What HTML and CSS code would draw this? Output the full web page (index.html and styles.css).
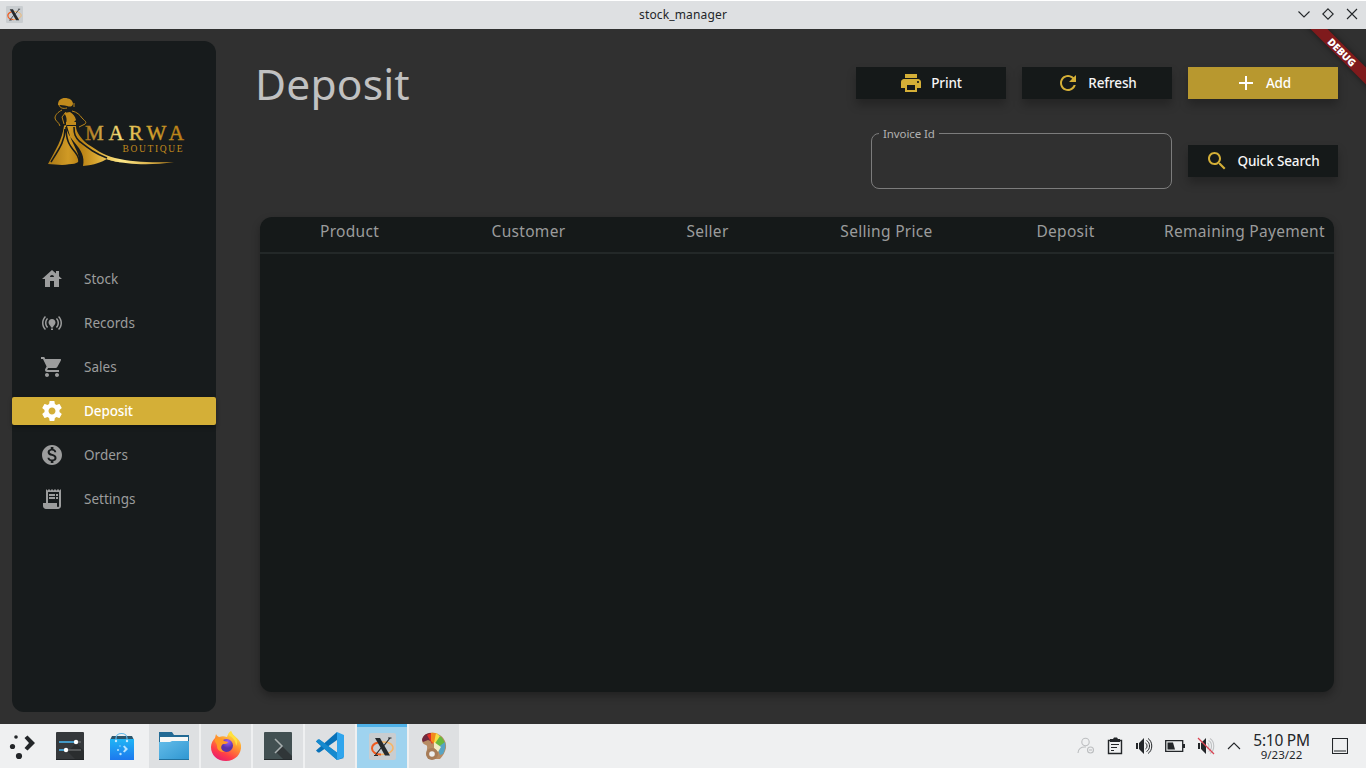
FILE: index.html
```html
<!DOCTYPE html>
<html lang="en">
<head>
<meta charset="utf-8">
<title>stock_manager</title>
<link rel="stylesheet" href="styles.css">
</head>
<body>
<svg class="defs" width="0" height="0">
  <symbol id="xorg" viewBox="0 0 27 27">
    <rect width="27" height="27" rx="2" fill="#c9cdd0"/>
    <path d="M9 9.500C5 10.500 3 13 3 15.500c0 3.500 4 6 9 6" fill="none" stroke="#f05a1e" stroke-width="2"/>
    <path d="M10 9.300c8-1.500 14 1.500 14 5.700 0 3.500-5 6.500-12 6.500" fill="none" stroke="#f7b563" stroke-width="1.500"/>
    <path d="M6 5h5l10 17.500h-5z" fill="#25292c"/>
    <path d="M21 5L15 12.500M12 15L6.500 22" stroke="#25292c" stroke-width="1.200"/>
    <path d="M19 5h3.500M5 22.500h4" stroke="#25292c"/>
  </symbol>
</svg>

<header class="titlebar">
  <svg class="titlebar-icon" width="17" height="17"><use href="#xorg"/></svg>
  <span class="titlebar-text">stock_manager</span>
  <div class="window-controls">
    <svg width="12" height="12" viewBox="0 0 12 12"><path d="M.5 3.500L6 9l5.500-5.500"/></svg>
    <svg width="12" height="12" viewBox="0 0 12 12"><path d="M6 .800L11.200 6 6 11.200.8 6z"/></svg>
    <svg width="12" height="12" viewBox="0 0 12 12"><path d="M1 1l10 10M11 1L1 11"/></svg>
  </div>
</header>

<main class="app">
  <div class="debug"><span>DEBUG</span></div>
  <aside class="sidebar">
    <svg class="logo" width="170" height="95" viewBox="0 0 170 95">
      <defs>
        <linearGradient id="gold" gradientUnits="userSpaceOnUse" x1="56" x2="154" y1="0" y2="0">
          <stop offset="0" stop-color="#a8741a"/><stop offset=".35" stop-color="#f5df7a"/><stop offset=".6" stop-color="#d4a632"/><stop offset="1" stop-color="#b87d13"/>
        </linearGradient>
        <linearGradient id="dress" gradientUnits="userSpaceOnUse" x1="18" x2="144" y1="0" y2="0">
          <stop offset="0" stop-color="#a97816"/><stop offset=".16" stop-color="#d09a25"/><stop offset=".26" stop-color="#b78014"/><stop offset=".38" stop-color="#d8a52f"/><stop offset=".58" stop-color="#ffe98a"/><stop offset="1" stop-color="#b98014"/>
        </linearGradient>
      </defs>
      <path fill="#c08a1c" d="M28 20c0-5 3-7 7-7s8 2 8 6c-1 3-3 3-6 2-3-1-6-1-9-1zM34 28l6-1c3 2 5 4 6 8l-4 4h-6c1-4 1-7-2-11zM36 37h10v3H36z"/>
      <path fill="none" stroke="#b78319" stroke-width="1" d="M29 20c1 3 4 4 8 3M32 25c-4 2-7 5-7 8 0 3 4 4 5 8M42 26c5 1 8 4 10 7 3 3 5 4 3 6l-6 3M36 27l-4 5 2 7M44 18v4"/>
      <path fill="url(#dress)" d="M34 41c-2 14-8 23-16 38l14 1c10-1 17-1 17-5 0-8-7-17-9-24l-3-10-2-1zM36 41h10c0 6 4 10 7 14l11 11c7 7 17 9 30 12-8-1-14-3-17-4-5 3-13 6-24 7 2-9-2-16-8-23-5-6-8-10-9-17z"/>
      <path fill="url(#dress)" d="M53 56c12 8 20 14 32 17 17 4 36 5 59 4-25 4-47 2-61-1-13-3-22-10-30-20z"/>
      <path fill="none" stroke="#171b1c" stroke-width="1.600" d="M35 44c0 12-6 20-14 33M36 42c0 13 3 18 9 25 4 5 5 9 4 14M44 42c0 7 1 10 6 15M49 56c9 7 15 12 28 17"/>
      <text class="logo-name" x="55" y="55" textLength="99" lengthAdjust="spacing" fill="url(#gold)" stroke="url(#gold)" stroke-width=".4">MARWA</text>
      <text class="logo-sub" x="92.500" y="67" textLength="60" lengthAdjust="spacing" fill="#c18a1c">BOUTIQUE</text>
    </svg>
    <nav class="nav">
      <a class="nav-item"><svg viewBox="0 0 24 24"><path d="M19 9.300V4h-3v2.600L12 3 2 12h3v8h5v-6h4v6h5v-8h3l-3-2.700zm-9 .7c0-1.100.9-2 2-2s2 .9 2 2h-4z"/></svg><span>Stock</span></a>
      <a class="nav-item"><svg viewBox="0 0 24 24"><path d="M15.500 11.500c0 2-2.500 3.500-2.500 5h-2c0-1.500-2.500-3-2.500-5C8.500 9.570 10.070 8 12 8s3.500 1.570 3.500 3.500zM13 17.500h-2V19h2zM22 12c0-2.760-1.120-5.260-2.930-7.070l-1.060 1.060C19.550 7.530 20.500 9.660 20.500 12s-.95 4.470-2.490 6.010l1.060 1.060C20.880 17.260 22 14.760 22 12zM3.500 12c0-2.340.95-4.470 2.490-6.010L4.930 4.930C3.120 6.740 2 9.240 2 12s1.120 5.260 2.930 7.070l1.060-1.060C4.450 16.470 3.500 14.340 3.500 12zM17.500 12c0 1.520-.62 2.890-1.610 3.890l1.060 1.060C18.220 15.680 19 13.930 19 12s-.78-3.680-2.050-4.950l-1.060 1.060C16.880 9.110 17.500 10.480 17.500 12zM7.050 16.950l1.060-1.060c-1-1-1.610-2.370-1.610-3.890s.62-2.890 1.610-3.890L7.050 7.050C5.780 8.320 5 10.070 5 12s.78 3.680 2.050 4.950z"/></svg><span>Records</span></a>
      <a class="nav-item"><svg viewBox="0 0 24 24"><path d="M7 18c-1.100 0-1.990.9-1.990 2S5.900 22 7 22s2-.9 2-2-.9-2-2-2zM1 2v2h2l3.600 7.590-1.350 2.450c-.16.280-.25.610-.25.960 0 1.100.9 2 2 2h12v-2H7.420c-.14 0-.25-.11-.25-.25l.03-.12.900-1.630h7.450c.75 0 1.410-.41 1.750-1.030l3.580-6.490A1 1 0 0 0 20 4H5.210l-.94-2H1zm16 16c-1.100 0-1.990.9-1.990 2s.89 2 1.990 2 2-.9 2-2-.9-2-2-2z"/></svg><span>Sales</span></a>
      <a class="nav-item active"><svg viewBox="0 0 24 24"><path d="M19.430 12.980c.04-.32.070-.64.070-.98s-.03-.66-.07-.98l2.110-1.650c.19-.15.240-.42.120-.64l-2-3.460c-.12-.22-.39-.3-.61-.22l-2.490 1c-.52-.4-1.080-.73-1.690-.98l-.38-2.650C14.460 2.180 14.250 2 14 2h-4c-.25 0-.46.180-.49.420l-.38 2.650c-.61.250-1.170.590-1.690.980l-2.490-1c-.23-.09-.49 0-.61.220l-2 3.460c-.13.220-.07.490.12.640l2.110 1.650c-.04.320-.07.650-.07.980s.03.660.07.980l-2.110 1.650c-.19.150-.24.420-.12.640l2 3.460c.12.220.39.300.61.220l2.490-1c.52.400 1.080.730 1.690.980l.38 2.650c.03.240.24.420.49.420h4c.25 0 .46-.18.490-.42l.38-2.650c.61-.25 1.170-.59 1.690-.98l2.490 1c.23.090.49 0 .61-.22l2-3.460c.12-.22.070-.49-.12-.64l-2.110-1.650zM12 15.500c-1.930 0-3.500-1.570-3.500-3.500s1.570-3.500 3.500-3.500 3.500 1.570 3.500 3.500-1.570 3.500-3.500 3.500z"/></svg><span>Deposit</span></a>
      <a class="nav-item"><svg viewBox="0 0 24 24"><path d="M12 2C6.480 2 2 6.480 2 12s4.480 10 10 10 10-4.480 10-10S17.520 2 12 2zm1.410 16.090V20h-2.670v-1.930c-1.710-.36-3.160-1.460-3.270-3.400h1.960c.1 1.050.82 1.870 2.650 1.870 1.960 0 2.400-.98 2.400-1.590 0-.83-.44-1.610-2.670-2.140-2.480-.6-4.180-1.620-4.180-3.670 0-1.720 1.390-2.840 3.110-3.210V4h2.670v1.950c1.860.450 2.790 1.860 2.850 3.390H14.300c-.05-1.110-.64-1.870-2.220-1.870-1.500 0-2.400.68-2.400 1.640 0 .84.650 1.390 2.670 1.910s4.180 1.390 4.180 3.910c-.01 1.830-1.380 2.830-3.120 3.160z"/></svg><span>Orders</span></a>
      <a class="nav-item"><svg viewBox="0 0 24 24"><path d="M19.500 3.500L18 2l-1.500 1.500L15 2l-1.500 1.500L12 2l-1.500 1.500L9 2 7.500 3.500 6 2v14H3v3c0 1.660 1.340 3 3 3h12c1.660 0 3-1.340 3-3V2l-1.500 1.500zM19 19c0 .55-.45 1-1 1s-1-.45-1-1v-3H8V5h11v14zM9 7h6v2H9zM16 7h2v2h-2zM9 10h6v2H9zM16 10h2v2h-2z"/></svg><span>Settings</span></a>
    </nav>
  </aside>

  <section class="content">
    <div class="toolbar">
      <h1 class="title">Deposit</h1>
      <div class="actions">
        <button class="btn"><svg viewBox="0 0 24 24"><path d="M19 8H5c-1.660 0-3 1.340-3 3v6h4v4h12v-4h4v-6c0-1.660-1.340-3-3-3zm-3 11H8v-5h8v5zm3-7c-.55 0-1-.45-1-1s.45-1 1-1 1 .45 1 1-.45 1-1 1zm-1-9H6v4h12V3z"/></svg><span>Print</span></button>
        <button class="btn"><svg viewBox="0 0 24 24"><path d="M17.650 6.350C16.200 4.900 14.210 4 12 4c-4.420 0-7.990 3.580-7.990 8s3.570 8 7.990 8c3.730 0 6.840-2.550 7.730-6h-2.080c-.82 2.330-3.040 4-5.650 4-3.310 0-6-2.690-6-6s2.690-6 6-6c1.660 0 3.140.690 4.220 1.780L13 11h7V4l-2.350 2.350z"/></svg><span>Refresh</span></button>
        <button class="btn primary"><svg viewBox="0 0 24 24"><path d="M19 13h-6v6h-2v-6H5v-2h6V5h2v6h6v2z"/></svg><span>Add</span></button>
      </div>
    </div>
    <div class="search-row">
      <fieldset class="field"><legend>Invoice Id</legend></fieldset>
      <button class="btn"><svg viewBox="0 0 24 24"><path d="M15.500 14h-.79l-.28-.27C15.410 12.590 16 11.110 16 9.500 16 5.910 13.090 3 9.500 3S3 5.910 3 9.500 5.910 16 9.500 16c1.610 0 3.090-.59 4.230-1.570l.27.280v.79l5 4.990L20.490 19l-4.990-5zm-6 0C7.010 14 5 11.990 5 9.500S7.010 5 9.500 5 14 7.010 14 9.500 11.990 14 9.500 14z"/></svg><span>Quick Search</span></button>
    </div>
    <div class="table">
      <div class="table-head">
        <span>Product</span><span>Customer</span><span>Seller</span><span>Selling Price</span><span>Deposit</span><span>Remaining Payement</span>
      </div>
    </div>
  </section>
</main>

<footer class="taskbar">
  <div class="tasks">
    <div class="task plain launcher"><svg width="28" height="28" viewBox="0 0 28 28" fill="#232629"><circle cx="8" cy="5" r="1.800"/><circle cx="4.500" cy="14.500" r="2.600"/><circle cx="11" cy="24" r="3.100"/><path d="M16.500 6l3-2.500 7.500 7.500-7.500 7.500-3-2.500 4.500-5z"/></svg></div>
    <div class="task plain"><svg width="28" height="28" viewBox="0 0 28 28"><rect width="28" height="28" rx="1" fill="#35383b"/><path d="M12 20l8-9 8 8v9h-8z" fill="#2a2d2f"/><path d="M0 27.500h28" stroke="#202326"/><path d="M3 10h22M3 18h22" stroke="#646769" stroke-width="1.500"/><path d="M3 10h16M3 18h7" stroke="#3daee9" stroke-width="1.500"/><circle cx="20" cy="10" r="2.200" fill="#fff"/><circle cx="10" cy="18" r="2.200" fill="#fff"/></svg></div>
    <div class="task plain"><svg width="28" height="28" viewBox="0 0 28 28"><defs><linearGradient id="bag" x2="0" y2="1"><stop stop-color="#20b5f5"/><stop offset="1" stop-color="#1d78ee"/></linearGradient></defs><path d="M4 4h20l2 4H2z" fill="#2e566c"/><rect x="2" y="7" width="24" height="21" fill="url(#bag)"/><path d="M8 9V6c0-6 11-6 11 0v3" fill="none" stroke="#62b9e9" stroke-width="1.200"/><circle cx="8" cy="9" r="1.200" fill="#c7e8ff"/><circle cx="19" cy="9" r="1.200" fill="#c7e8ff"/><g fill="#b8e3ff"><circle cx="12" cy="14" r=".7"/><circle cx="10" cy="18" r="1"/><circle cx="12.500" cy="22" r="1.200"/><path d="M15 14.500l1.500-1 3.500 3.500-3.500 3.500-1.500-1 2-2.500z"/></g></svg></div>
    <div class="task"><svg width="30" height="28" viewBox="0 0 30 28"><defs><linearGradient id="folder" x2="1" y2="1"><stop stop-color="#63bce9"/><stop offset="1" stop-color="#2f96d1"/></linearGradient></defs><path d="M0 0h13l2 3h15v9H0z" fill="#236a94"/><path d="M1 5h28v8H1z" fill="#f8f8f6"/><path d="M0 10h11l2-1h17v19H0z" fill="url(#folder)"/><path d="M0 27.500h30" stroke="#22719e"/></svg></div>
    <div class="task"><svg width="32" height="32" viewBox="0 0 32 32"><defs><linearGradient id="fox" x1=".8" x2=".25" y1="0" y2="1"><stop stop-color="#fff44f"/><stop offset=".4" stop-color="#ff9630"/><stop offset=".75" stop-color="#ff3c48"/><stop offset="1" stop-color="#e51a74"/></linearGradient><radialGradient id="globe" cx=".6" cy=".2"><stop stop-color="#9b5df7"/><stop offset="1" stop-color="#5b32a8"/></radialGradient></defs><path d="M17 7c1-3 2-5 4-6 1 5 9 7 10 14 1 9-6 16-15 16S1 25 1 17c0-4 2-7 4-9l1-4c1 2 2 2 3 3 3-1 5-1 8 0z" fill="url(#fox)"/><circle cx="16.500" cy="15.500" r="6.500" fill="url(#globe)"/><path d="M5 9c4-2 7-1 9 2l4 1c-1 3-5 1-6 3-2 3 0 6 3 7-5 0-8-2-8-6 0-3-3-4-2-7z" fill="#ff9a26"/><path d="M18 5c5 2 8 6 8 11 3-5 0-9-3-11l-2-4z" fill="#ffe13d"/></svg></div>
    <div class="task"><svg width="28" height="28" viewBox="0 0 28 28"><rect width="28" height="28" rx="1" fill="#425052"/><path d="M12 20l6-6 10 10v4h-8z" fill="#303638"/><path d="M0 27.500h28" stroke="#252b2d"/><path d="M11 7l7 7-7 7" fill="none" stroke="#a8afb0" stroke-width="1.500"/></svg></div>
    <div class="task"><svg width="28" height="28" viewBox="0 0 28 28"><path d="M0 9.500l2-2h1.500L28 26l-7 2z" fill="#187fc4"/><path d="M0 18.500L21 0v8L3.500 20.500H2z" fill="#0871b8"/><path d="M21 0l7 3v22l-7 3z" fill="#30a5ed"/><path d="M0 9.500L2 7.500h1.500L21 20.500V28z" fill="#168acf"/></svg></div>
    <div class="task current"><svg width="27" height="27"><use href="#xorg"/></svg></div>
    <div class="task"><svg width="28" height="28" viewBox="0 0 28 28"><path d="M2 8C3 2 9 0 14 1c8 1 13 8 12 15-1 4-3 8-6 11H9c-5-5-1-9-2-13-1-2-5-1-5-6z" fill="#b78b63"/><path d="M2 8C3 2 8 1 11 1l2 9-5-2-5 2z" fill="#70283e"/><path d="M7 3l4-2 3 8-2 3z" fill="#e22e26"/><path d="M11 1c4-1 7 1 7 1l-3 11-4-4z" fill="#f28a1d"/><path d="M16 1l5 4-6 10-1-4z" fill="#f4df45"/><path d="M20 4c3 2 5 6 5 9l-9 4-2-4z" fill="#69b93d"/><path d="M25 10c1 4 0 8-2 12l-3 1-3-7z" fill="#57a4c4"/><path d="M14 10l7 5-3 5-4-4z" fill="#f1ecc3"/><circle cx="12" cy="22" r="6" fill="#a77c58"/><circle cx="12" cy="22" r="2.800" fill="#eceeee"/></svg></div>
  </div>
  <div class="tray">
    <svg class="muted" width="18" height="18" viewBox="0 0 18 18"><circle cx="8.500" cy="5" r="3.700"/><path d="M1 16c0-4 3-6.500 8-6"/><circle cx="13.500" cy="13" r="3"/><path d="M12 13h3"/></svg>
    <svg width="16" height="18" viewBox="0 0 16 18"><path d="M1.500 3.500h13v13h-13z" stroke-width="1.400"/><path d="M3 5V2h3l1-1.500h3L11 2h2v3z" fill="#232629" stroke="none"/><path d="M4 7.500h8M4 10.500h6M4 13.500h3"/></svg>
    <svg width="18" height="18" viewBox="0 0 18 18"><path d="M1 6h2v6H1zM4 6l5-5v16l-5-5z" fill="#232629" stroke="none"/><path d="M10.500 6c2 1 2 5 0 6M11.500 3.500c4 2 4 9 0 11M13 1.500c5 3 5 12 0 15" stroke-width="1"/></svg>
    <svg width="20" height="14" viewBox="0 0 20 14"><path d="M.7 1.700h17v10.600H.7z" stroke-width="1.300"/><path d="M2.500 3.500h5.500l2 7H2.500zM18 5h2v4h-2z" fill="#232629" stroke="none"/></svg>
    <svg width="18" height="18" viewBox="0 0 18 18"><path d="M1 6h2v6H1zM4 6l5-5v16l-5-5z" fill="#232629" stroke="none"/><path d="M10.500 6c2 1 2 5 0 6M11.500 3.500c4 2 4 9 0 11M13 1.500c5 3 5 12 0 15" stroke="#bfc1c3"/><path d="M1 1l16 16" stroke="#da4453" stroke-width="1.200"/></svg>
    <svg width="14" height="14" viewBox="0 0 14 14"><path d="M1 10l6-6 6 6"/></svg>
    <div class="clock"><span class="time">5:10 PM</span><span class="date">9/23/22</span></div>
    <svg class="desktop" width="16" height="16" viewBox="0 0 16 16"><path d="M.5.500h15v15H.5zM2 13h12"/></svg>
  </div>
</footer>
</body>
</html>
```
FILE: styles.css
```css
* { box-sizing: border-box; }
body {
  margin: 0;
  width: 1366px;
  height: 768px;
  overflow: hidden;
  display: flex;
  flex-direction: column;
  background: #303030;
  font-family: "Noto Sans", sans-serif;
}
svg { display: block; flex: none; }
.defs { position: absolute; }

.titlebar {
  height: 29px;
  flex: none;
  display: grid;
  grid-template-columns: 1fr auto 1fr;
  align-items: center;
  padding: 0 8px 2px 6px;
  border-top: 1px solid #fff;
  background: #dee0e2;
  color: #232629;
  font-size: 12px;
}
.titlebar-text { margin-left: 2px; letter-spacing: .15px; }
.window-controls { justify-self: end; display: flex; gap: 12px; }
.window-controls svg { fill: none; stroke: #232629; stroke-width: 1.1; }

.app {
  position: relative;
  height: 695px;
  flex: none;
  display: flex;
  padding: 12px;
  overflow: hidden;
}
.debug {
  position: absolute;
  top: 17px;
  right: -29px;
  width: 106px;
  height: 12px;
  display: flex;
  align-items: center;
  justify-content: center;
  background: #7f1a1c;
  color: #fff;
  font-size: 10.2px;
  font-weight: 900;
  transform: rotate(45deg);
  box-shadow: 0 0 6px rgba(0, 0, 0, .5);
}

.sidebar {
  width: 204px;
  height: 671px;
  flex: none;
  padding-top: 44px;
  border-radius: 12px;
  background: #171b1c;
}
.logo { margin-left: 18px; }
.logo-name { font: 21px "Liberation Serif", serif; }
.logo-sub { font: 9.5px "Liberation Serif", serif; }
.nav { display: flex; flex-direction: column; gap: 16px; margin-top: 85px; }
.nav-item {
  height: 28px;
  display: flex;
  align-items: center;
  gap: 20px;
  padding-left: 28px;
  border-radius: 2px;
  color: #9c9d9d;
  font-size: 13.5px;
  letter-spacing: .02px;
}
.nav-item svg { width: 24px; height: 24px; fill: currentColor; }
.nav-item.active {
  background: #d4af37;
  color: #fff;
  font-weight: 500;
  letter-spacing: -.1px;
  box-shadow: 0 2px 4px rgba(0, 0, 0, .35);
}

.content { flex: 1; padding: 26px 16px 0 41px; }
.toolbar { display: flex; justify-content: space-between; height: 66px; }
.title {
  margin: -12px 0 0 -2px;
  font-size: 42.5px;
  font-weight: 400;
  line-height: 57px;
  color: #c1c1c1;
  letter-spacing: .2px;
}
.actions { display: flex; gap: 16px; }
.btn {
  width: 150px;
  height: 32px;
  display: flex;
  align-items: center;
  justify-content: center;
  gap: 8px;
  border: 0;
  padding: 0 1px 0 0;
  background: #151919;
  color: #f5f5f5;
  font: 500 13.5px "Noto Sans", sans-serif;
  letter-spacing: -.15px;
  box-shadow: 0 6px 10px rgba(0, 0, 0, .25);
}
.btn svg { width: 24px; height: 24px; fill: #d4af37; }
.btn.primary { background: #b8982f; color: #fff; }
.btn.primary svg { fill: #fff; }
.search-row { display: flex; justify-content: flex-end; align-items: center; gap: 16px; height: 56px; }
.field {
  width: 301px;
  height: 63px;
  margin: -7px 0 0;
  padding: 0;
  border: 1px solid #7c7c7c;
  border-radius: 8px;
}
.field legend {
  margin-left: 7px;
  padding: 0 4px;
  color: #b0b0b0;
  font-size: 11.5px;
  line-height: 15px;
  letter-spacing: -.1px;
}
.table {
  width: 1074px;
  height: 475px;
  margin: 28px 0 0 3px;
  border-radius: 12px;
  background: #151919;
  box-shadow: 0 4px 8px rgba(0, 0, 0, .3);
}
.table-head {
  height: 37px;
  display: grid;
  grid-template-columns: repeat(6, 1fr);
  padding-top: 3px;
  border-bottom: 2px solid #232828;
  text-align: center;
  white-space: nowrap;
  color: #9b9c9c;
  font-size: 15.5px;
  line-height: 22px;
  letter-spacing: .3px;
}

.taskbar {
  height: 44px;
  flex: none;
  display: flex;
  justify-content: space-between;
  background: #eff0f1;
  color: #232629;
}
.tasks { display: flex; gap: 2px; margin-left: -7px; }
.task {
  width: 50px;
  display: flex;
  align-items: center;
  justify-content: center;
  background: #dee0e2;
}
.task.plain { background: none; }
.task.launcher { padding-left: 7px; }
.task.current { background: #9fd3ef; box-shadow: inset 0 3px #4fb1e8; }
.tray { display: flex; align-items: center; gap: 12px; padding-right: 18px; }
.tray svg { fill: none; stroke: #232629; stroke-width: 1.1; }
.tray .muted { stroke: #bcbec0; }
.clock { width: 57px; display: flex; flex-direction: column; align-items: center; white-space: nowrap; }
.time { font-size: 15.5px; line-height: 16px; letter-spacing: -.25px; }
.date { font-size: 11.5px; line-height: 13px; }
.tray .desktop { margin-left: 10px; }
```
